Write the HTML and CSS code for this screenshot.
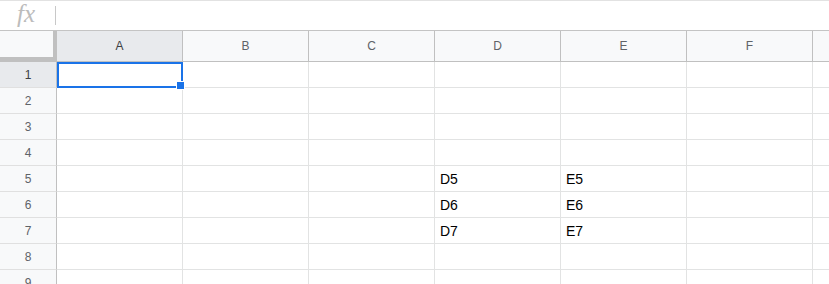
FILE: index.html
```html
<!DOCTYPE html>
<html>
<head>
<meta charset="utf-8">
<link rel="stylesheet" href="styles.css">
</head>
<body>
<div class="fx-bar">
  <span class="fx">fx</span>
  <span class="fx-sep"></span>
</div>
<div class="grid">
  <div class="row head">
    <div class="corner"></div>
    <div class="ch ch-sel">A</div>
    <div class="ch">B</div>
    <div class="ch">C</div>
    <div class="ch">D</div>
    <div class="ch">E</div>
    <div class="ch">F</div>
    <div class="ch"></div>
  </div>
  <div class="row"><div class="rh rh-sel">1</div><div class="c"></div><div class="c"></div><div class="c"></div><div class="c"></div><div class="c"></div><div class="c"></div><div class="c"></div></div>
  <div class="row"><div class="rh">2</div><div class="c"></div><div class="c"></div><div class="c"></div><div class="c"></div><div class="c"></div><div class="c"></div><div class="c"></div></div>
  <div class="row"><div class="rh">3</div><div class="c"></div><div class="c"></div><div class="c"></div><div class="c"></div><div class="c"></div><div class="c"></div><div class="c"></div></div>
  <div class="row"><div class="rh">4</div><div class="c"></div><div class="c"></div><div class="c"></div><div class="c"></div><div class="c"></div><div class="c"></div><div class="c"></div></div>
  <div class="row"><div class="rh">5</div><div class="c"></div><div class="c"></div><div class="c"></div><div class="c">D5</div><div class="c">E5</div><div class="c"></div><div class="c"></div></div>
  <div class="row"><div class="rh">6</div><div class="c"></div><div class="c"></div><div class="c"></div><div class="c">D6</div><div class="c">E6</div><div class="c"></div><div class="c"></div></div>
  <div class="row"><div class="rh">7</div><div class="c"></div><div class="c"></div><div class="c"></div><div class="c">D7</div><div class="c">E7</div><div class="c"></div><div class="c"></div></div>
  <div class="row"><div class="rh">8</div><div class="c"></div><div class="c"></div><div class="c"></div><div class="c"></div><div class="c"></div><div class="c"></div><div class="c"></div></div>
  <div class="row"><div class="rh">9</div><div class="c"></div><div class="c"></div><div class="c"></div><div class="c"></div><div class="c"></div><div class="c"></div><div class="c"></div></div>
  <div class="selection"></div>
  <div class="fill-handle"></div>
</div>
</body>
</html>
```
FILE: styles.css
```css
html, body {
  margin: 0;
  padding: 0;
  background: #ffffff;
  overflow: hidden;
  width: 829px;
  height: 284px;
  font-family: "Liberation Sans", Arial, sans-serif;
}

.fx-bar {
  box-sizing: border-box;
  height: 31px;
  border-top: 1px solid #e2e2e2;
  border-bottom: 1px solid #c4c4c4;
  display: flex;
  align-items: center;
  padding-left: 17px;
}

.fx {
  font-family: "Liberation Serif", "Times New Roman", serif;
  font-style: italic;
  font-size: 25px;
  color: #bcbcbc;
  width: 38px;
  line-height: 24px;
  margin-top: -3px;
}

.fx-sep {
  width: 1px;
  height: 19px;
  background: #c8c8c8;
}

.grid {
  position: relative;
  width: 829px;
  overflow: hidden;
}

.row {
  display: flex;
  height: 26px;
}

.row.head {
  height: 31px;
}

.corner {
  box-sizing: border-box;
  flex: 0 0 57px;
  height: 31px;
  background: #f8f9fa;
  border-right: 4px solid #c0c0c0;
  border-bottom: 5px solid #c0c0c0;
}

.ch {
  box-sizing: border-box;
  flex: 0 0 126px;
  height: 31px;
  background: #f8f9fa;
  border-right: 1px solid #c0c0c0;
  border-bottom: 1px solid #c0c0c0;
  display: flex;
  align-items: center;
  justify-content: center;
  font-size: 12px;
  color: #5f6368;
}

.ch-sel {
  background: #e8eaed;
  color: #3c4043;
}

.rh {
  box-sizing: border-box;
  flex: 0 0 57px;
  height: 26px;
  background: #f8f9fa;
  border-right: 1px solid #c0c0c0;
  border-bottom: 1px solid #e0e0e0;
  display: flex;
  align-items: center;
  justify-content: center;
  font-size: 12px;
  color: #5f6368;
}

.rh-sel {
  background: #e8eaed;
  color: #3c4043;
}

.c {
  box-sizing: border-box;
  flex: 0 0 126px;
  height: 26px;
  border-right: 1px solid #e2e3e3;
  border-bottom: 1px solid #e2e3e3;
  display: flex;
  align-items: center;
  padding-left: 5px;
  padding-top: 1px;
  font-size: 14px;
  color: #000000;
}

.selection {
  position: absolute;
  box-sizing: border-box;
  left: 57px;
  top: 31px;
  width: 126px;
  height: 26px;
  border: 2px solid #1a73e8;
}

.fill-handle {
  position: absolute;
  box-sizing: border-box;
  left: 176px;
  top: 50px;
  width: 9px;
  height: 9px;
  background: #1a73e8;
  border: 1px solid #ffffff;
}
```
